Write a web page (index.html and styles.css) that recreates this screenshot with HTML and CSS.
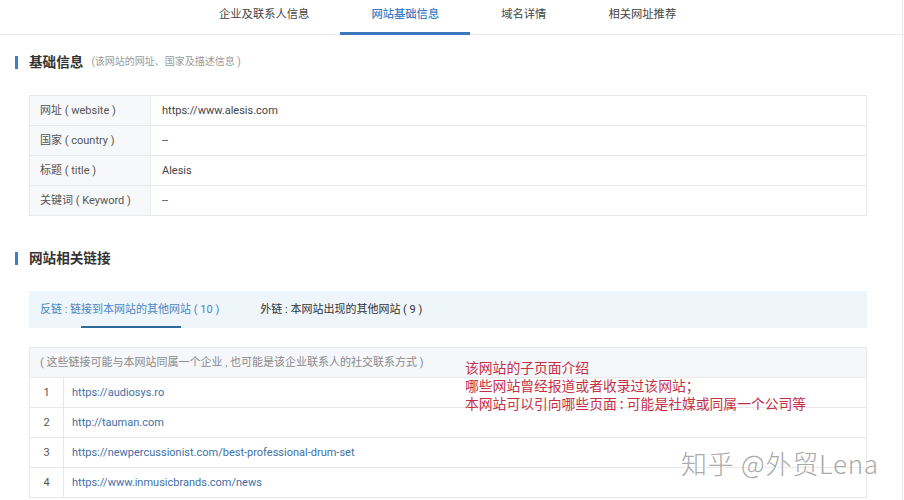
FILE: index.html
```html
<!DOCTYPE html>
<html lang="zh-CN">
<head>
<meta charset="utf-8">
<title>网站基础信息</title>
<link rel="stylesheet" href="styles.css">
</head>
<body>
<div class="page">
  <nav class="nav">
    <a class="nav-item">企业及联系人信息</a>
    <a class="nav-item active">网站基础信息</a>
    <a class="nav-item">域名详情</a>
    <a class="nav-item">相关网址推荐</a>
  </nav>

  <section class="section">
    <h2 class="sec-title"><span class="bar"></span>基础信息<small class="sec-sub">(该网站的网址、国家及描述信息 )</small></h2>
    <div class="info-table">
      <div class="info-row"><div class="info-label">网址 ( website )</div><div class="info-value">https://www.alesis.com</div></div>
      <div class="info-row"><div class="info-label">国家 ( country )</div><div class="info-value">--</div></div>
      <div class="info-row"><div class="info-label">标题 ( title )</div><div class="info-value">Alesis</div></div>
      <div class="info-row"><div class="info-label">关键词 ( Keyword )</div><div class="info-value">--</div></div>
    </div>
  </section>

  <section class="section section-links">
    <h2 class="sec-title"><span class="bar"></span>网站相关链接</h2>
    <div class="link-tabs">
      <div class="link-tab active">反链 : 链接到本网站的其他网站 ( 10 )</div>
      <div class="link-tab">外链 : 本网站出现的其他网站 ( 9 )</div>
    </div>
    <div class="link-table">
      <div class="link-head"><span>( 这些链接可能与本网站同属一个企业 , 也可能是该企业联系人的社交联系方式 )</span></div>
      <div class="link-row"><div class="link-num">1</div><div class="link-url"><span>https://audiosys.ro</span></div></div>
      <div class="link-row"><div class="link-num">2</div><div class="link-url"><span>http://tauman.com</span></div></div>
      <div class="link-row"><div class="link-num">3</div><div class="link-url"><span>https://newpercussionist.com/best-professional-drum-set</span></div></div>
      <div class="link-row"><div class="link-num">4</div><div class="link-url"><span>https://www.inmusicbrands.com/news</span></div></div>
    </div>
  </section>

  <div class="note">
    <p>该网站的子页面介绍</p>
    <p>哪些网站曾经报道或者收录过该网站；</p>
    <p>本网站可以引向哪些页面 : 可能是社媒或同属一个公司等</p>
  </div>

  <div class="watermark">知乎 @外贸Lena</div>
</div>
</body>
</html>
```

FILE: styles.css
```css
* { box-sizing: border-box; margin: 0; padding: 0; }

html, body {
  background: #fff;
}

body {
  font-family: Roboto, "Noto Sans CJK SC", sans-serif;
  color: #333;
  overflow: hidden;
}

.page {
  position: relative;
  width: 903px;
  height: 500px;
  border-right: 1px solid #e9e9e9;
  overflow: hidden;
}

.nav {
  display: flex;
  height: 35px;
  padding-left: 188px;
  border-bottom: 1px solid #e6e8eb;
}

.nav-item {
  display: block;
  padding: 0 31px;
  font-size: 11.3px;
  line-height: 30px;
  color: #444;
  border-bottom: 3px solid transparent;
  height: 35px;
}

.nav-item.active {
  color: #3b7cc4;
  font-weight: 500;
  border-bottom-color: #3b78c0;
}

.section {
  padding-left: 15px;
}

.sec-title {
  display: flex;
  align-items: center;
  height: 16px;
  margin-top: 19px;
  font-size: 13.6px;
  font-weight: 700;
  color: #333;
  line-height: 16px;
}

.bar {
  display: block;
  width: 3px;
  height: 13px;
  background: #3d7fc9;
  margin-right: 11px;
}

.sec-sub {
  font-size: 10px;
  font-weight: 400;
  color: #9a9a9a;
  margin-left: 8px;
}

.info-table {
  margin: 25px 0 0 14px;
  width: 838px;
  border: 1px solid #e8e8e8;
  border-bottom: none;
}

.info-row {
  display: flex;
  height: 30px;
  border-bottom: 1px solid #e8e8e8;
  font-size: 11px;
  line-height: 29px;
}

.info-label {
  width: 121px;
  padding-left: 10px;
  background: #f7f8fa;
  color: #555;
  border-right: 1px solid #eceef1;
}

.info-value {
  flex: 1;
  padding-left: 11px;
  color: #444;
}

.section-links .sec-title {
  margin-top: 34px;
}

.link-tabs {
  display: flex;
  margin: 25px 0 0 14px;
  width: 838px;
  height: 37px;
  background: #eef5fb;
  padding-left: 11px;
}

.link-tab {
  font-size: 11px;
  line-height: 37px;
  color: #333;
  position: relative;
}

.link-tab.active {
  color: #4a86c2;
  margin-right: 41px;
}

.link-tab.active::after {
  content: "";
  position: absolute;
  left: 41px;
  width: 100px;
  bottom: 0;
  height: 2px;
  background: #2f6b9a;
}

.link-table {
  margin: 19px 0 0 14px;
  width: 838px;
  border: 1px solid #e8e8e8;
  border-bottom: none;
}

.link-head {
  height: 30px;
  background: #f5f7fa;
  border-bottom: 1px solid #e8e8e8;
  font-size: 11px;
  line-height: 29px;
  color: #8a8a8a;
  padding-left: 10px;
}

.link-row {
  display: flex;
  height: 30px;
  border-bottom: 1px solid #e8e8e8;
  font-size: 11px;
  line-height: 29px;
}

.link-num {
  width: 34px;
  text-align: center;
  color: #555;
  border-right: 1px solid #e8e8e8;
}

.link-url {
  padding-left: 8px;
  color: #3e6fa6;
}

.note {
  position: absolute;
  left: 465px;
  top: 358px;
  font-family: "Noto Sans CJK SC", sans-serif;
  font-size: 13.8px;
  line-height: 18px;
  color: #c42f45;
}

.watermark {
  position: absolute;
  left: 681px;
  top: 445px;
  font-family: "Noto Sans CJK SC", sans-serif;
  font-size: 26px;
  font-weight: 300;
  line-height: 36px;
  color: #aaaaaa;
  text-shadow: 1px 1px 0 #fff, -1px -1px 0 #fff;
  letter-spacing: 0.75px;
}
```
